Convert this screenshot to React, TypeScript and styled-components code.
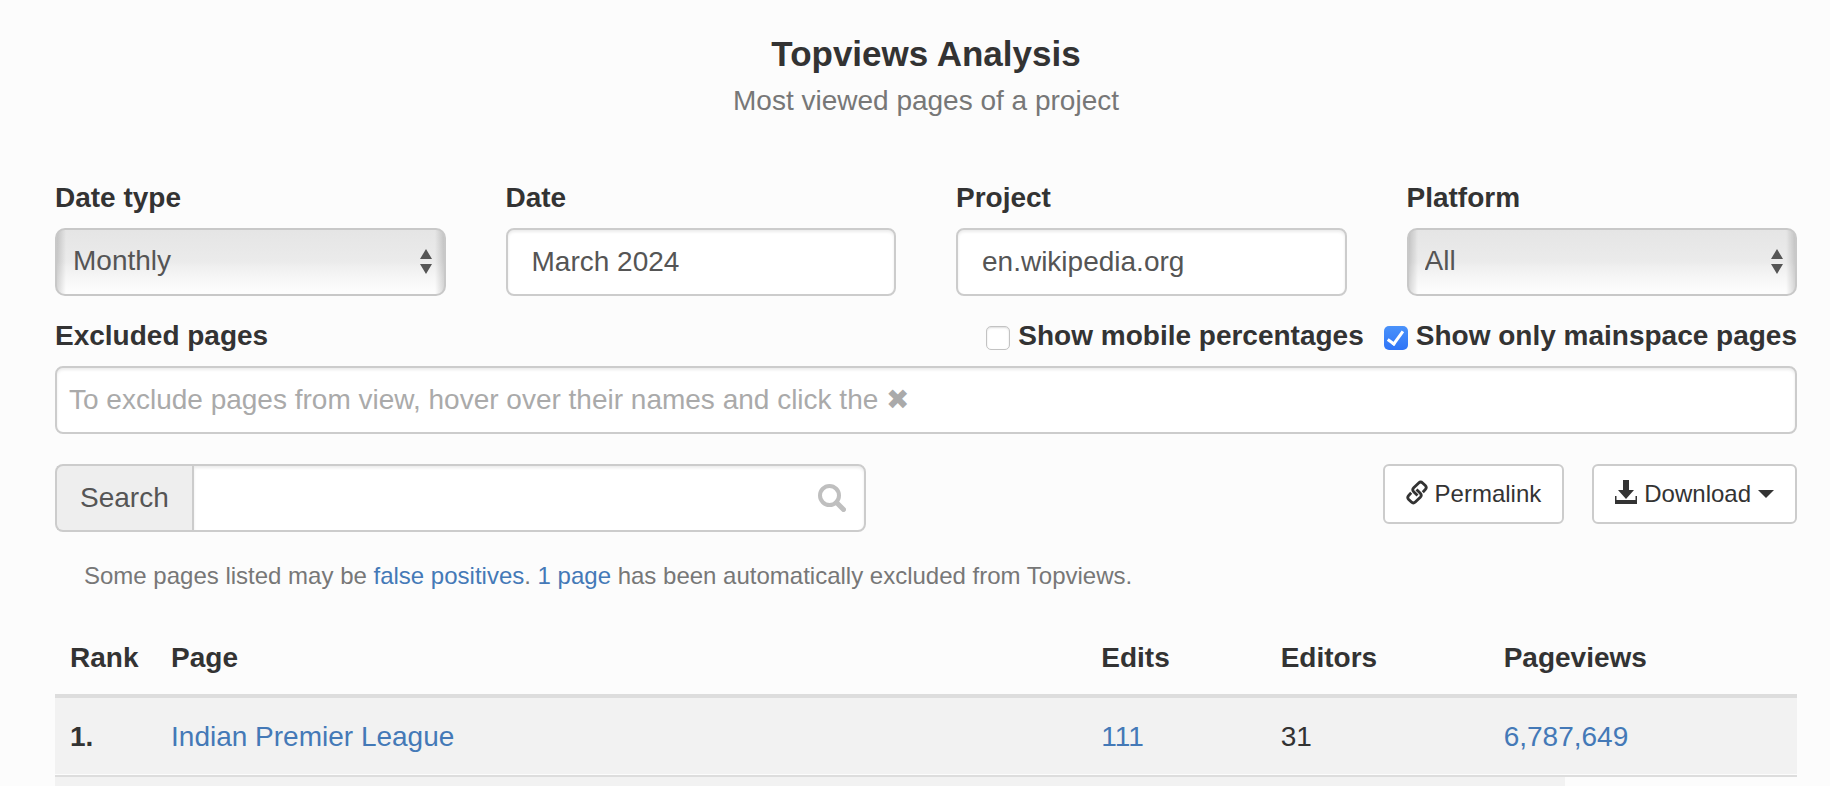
import React from "react";
import styled, { createGlobalStyle } from "styled-components";

const GlobalStyle = createGlobalStyle`
  *, *::before, *::after { box-sizing: border-box; }
  body {
    margin: 0;
    background: #fcfcfc;
    color: #333;
    font: 28px/40px "Liberation Sans", Arial, "DejaVu Sans", sans-serif;
  }
  input, select, button { font: inherit; margin: 0; }
`;

const Page = styled.main`
  padding: 32px 33px 0 55px;
`;

const Header = styled.header`
  text-align: center;
  margin-bottom: 57px;
`;

const Title = styled.h1`
  margin: 0;
  font-size: 35px;
  line-height: 44px;
`;

const Subtitle = styled.p`
  margin: 5px 0 0;
  color: #777;
`;

const Filters = styled.div`
  display: grid;
  grid-template-columns: repeat(4, 1fr);
  column-gap: 60px;
`;

const Field = styled.div`
  display: flex;
  flex-direction: column;
  gap: 10px;
`;

const Label = styled.label`
  font-weight: bold;
`;

const TextInput = styled.input`
  width: 100%;
  height: 68px;
  padding: 0 24px;
  color: #555;
  background: #fff;
  border: 2px solid #ccc;
  border-radius: 8px;
  box-shadow: inset 0 2px 3px rgba(0, 0, 0, 0.08);
`;

const SelectWrap = styled.div`
  position: relative;
  display: flex;
`;

const Select = styled.select`
  appearance: none;
  width: 100%;
  height: 68px;
  padding: 0 40px 2px 16px;
  color: #555;
  background:
    linear-gradient(
      to right,
      rgba(0, 0, 0, 0.15),
      transparent 9px,
      transparent calc(100% - 9px),
      rgba(0, 0, 0, 0.15)
    ),
    linear-gradient(#e5e5e5, #ebebeb 50%, #f0f0f0 58%, #fdfdfd 95%);
  border: 2px solid #c8c8c8;
  border-radius: 10px;
`;

const SelectArrows = styled.svg`
  position: absolute;
  right: 14px;
  top: 21px;
  pointer-events: none;
`;

const ExcludedHead = styled.div`
  display: flex;
  justify-content: space-between;
  margin: 20px 0 10px;
`;

const Options = styled.div`
  display: flex;
  gap: 20px;
`;

const CheckLabel = styled.label`
  display: flex;
  align-items: center;
  gap: 8px;
  font-weight: bold;
`;

const CheckBox = styled.input`
  appearance: none;
  display: grid;
  place-content: center;
  width: 24px;
  height: 24px;
  margin-top: 4px;
  background: #fff;
  border: 1px solid #c3c3c3;
  border-radius: 5px;
  box-shadow: inset 0 1px 2px rgba(0, 0, 0, 0.14);

  &:checked {
    border: none;
    box-shadow: none;
    background: linear-gradient(#4a92fa, #2f74f7);
  }
  &:checked::after {
    content: "";
    width: 9px;
    height: 17px;
    margin-bottom: 4px;
    border: solid #fff;
    border-width: 0 3px 3px 0;
    transform: rotate(36deg);
  }
`;

const ExcludedInput = styled(TextInput)`
  display: block;
  padding: 0 12px;

  &::placeholder {
    color: #aaa;
    opacity: 1;
  }
`;

const Toolbar = styled.div`
  display: flex;
  justify-content: space-between;
  align-items: flex-start;
  margin-top: 30px;
`;

const SearchGroup = styled.div`
  position: relative;
  display: flex;
  width: 811px;
  max-width: 60%;
`;

const SearchAddon = styled.label`
  padding: 12px 23px 0;
  color: #555;
  background: #eee;
  border: 2px solid #ccc;
  border-right: none;
  border-radius: 8px 0 0 8px;
`;

const SearchInput = styled(TextInput)`
  flex: 1;
  min-width: 0;
  border-radius: 0 8px 8px 0;
`;

const SearchIcon = styled.svg`
  position: absolute;
  right: 20px;
  top: 20px;
`;

const Buttons = styled.div`
  display: flex;
  gap: 28px;
`;

const Button = styled.button`
  display: flex;
  align-items: center;
  gap: 7px;
  height: 60px;
  padding: 0 21px;
  color: #333;
  font-size: 24px;
  line-height: 36px;
  background: #fff;
  border: 2px solid #ccc;
  border-radius: 6px;
`;

const ButtonIcon = styled.svg`
  margin-bottom: 4px;
`;

const Notice = styled.p`
  margin: 26px 29px 0;
  color: #777;
  font-size: 24px;
  line-height: 36px;
`;

const Link = styled.a`
  color: #4479b7;
  text-decoration: none;
`;

const Table = styled.table`
  width: 100%;
  margin-top: 28px;
  table-layout: fixed;
  border-collapse: collapse;
`;

const HeadCell = styled.th<{ $width: string }>`
  width: ${(p) => p.$width};
  padding: 16px 15px;
  text-align: left;
  border-bottom: 4px solid #ddd;
`;

const Row = styled.tr<{ $share: number }>`
  background: linear-gradient(#f2f2f2, #f2f2f2) no-repeat 0 0 / ${(p) => p.$share}% 100%;
  border-bottom: 2px solid #ddd;
`;

const Cell = styled.td<{ $bold?: boolean }>`
  padding: 19px 15px 18px;
  font-weight: ${(p) => (p.$bold ? "bold" : "normal")};
`;

const NextRow = styled.tr`
  height: 10px;
  background: linear-gradient(#f2f2f2, #f2f2f2) no-repeat 0 0 / 86.7% 100%;
`;

const Arrows = () => (
  <SelectArrows width="12" height="26" viewBox="0 0 12 26" fill="#555" aria-hidden="true">
    <path d="M6 0l6 10H0zM6 25l6-10H0z" />
  </SelectArrows>
);

const columns = [
  { name: "Rank", width: "5.8%" },
  { name: "Page", width: "53.4%" },
  { name: "Edits", width: "10.3%" },
  { name: "Editors", width: "12.8%" },
  { name: "Pageviews", width: "17.7%" },
];

export default function App() {
  return (
    <Page>
      <GlobalStyle />
      <Header>
        <Title>Topviews Analysis</Title>
        <Subtitle>Most viewed pages of a project</Subtitle>
      </Header>

      <Filters>
        <Field>
          <Label htmlFor="date-type">Date type</Label>
          <SelectWrap>
            <Select id="date-type" defaultValue="Monthly">
              <option>Monthly</option>
              <option>Daily</option>
            </Select>
            <Arrows />
          </SelectWrap>
        </Field>
        <Field>
          <Label htmlFor="date">Date</Label>
          <TextInput id="date" defaultValue="March 2024" />
        </Field>
        <Field>
          <Label htmlFor="project">Project</Label>
          <TextInput id="project" defaultValue="en.wikipedia.org" />
        </Field>
        <Field>
          <Label htmlFor="platform">Platform</Label>
          <SelectWrap>
            <Select id="platform" defaultValue="All">
              <option>All</option>
              <option>Desktop</option>
            </Select>
            <Arrows />
          </SelectWrap>
        </Field>
      </Filters>

      <ExcludedHead>
        <Label htmlFor="excluded">Excluded pages</Label>
        <Options>
          <CheckLabel>
            <CheckBox type="checkbox" />
            Show mobile percentages
          </CheckLabel>
          <CheckLabel>
            <CheckBox type="checkbox" defaultChecked />
            Show only mainspace pages
          </CheckLabel>
        </Options>
      </ExcludedHead>
      <ExcludedInput
        id="excluded"
        placeholder="To exclude pages from view, hover over their names and click the ✖"
      />

      <Toolbar>
        <SearchGroup>
          <SearchAddon htmlFor="search">Search</SearchAddon>
          <SearchInput id="search" />
          <SearchIcon width="28" height="28" viewBox="0 0 28 28" fill="none" stroke="#bfbfbf" aria-hidden="true">
            <circle cx="11.5" cy="11.5" r="9.5" strokeWidth="4" />
            <path d="M18.5 18.5L25.500 25.500" strokeWidth="5" strokeLinecap="round" />
          </SearchIcon>
        </SearchGroup>
        <Buttons>
          <Button type="button">
            <ButtonIcon width="22" height="25" viewBox="0 0 22 25" fill="none" stroke="#333" strokeWidth="2.8" aria-hidden="true">
              <path d="M11.500 15.500L7.700 11.800Q5.800 9.800 7.700 7.800L12.700 2.900Q14.700 1 16.600 2.900L19.300 5.500Q21.200 7.500 19.300 9.500L16.800 12.200" />
              <path d="M10.500 9.500L14.300 13.200Q16.200 15.200 14.300 17.200L9.300 22.100Q7.300 24 5.400 22.100L2.700 19.500Q0.800 17.500 2.700 15.500L5.200 12.800" />
            </ButtonIcon>
            Permalink
          </Button>
          <Button type="button">
            <ButtonIcon width="22" height="24" viewBox="0 0 22 24" fill="#333" aria-hidden="true">
              <path d="M8 0h6v10h5l-8 9-8-9h5zM0 16h1.500v4h19v-4H22v8H0z" />
            </ButtonIcon>
            Download
            <svg width="16" height="8" viewBox="0 0 16 8" fill="#333" aria-hidden="true">
              <path d="M0 0h16l-8 8z" />
            </svg>
          </Button>
        </Buttons>
      </Toolbar>

      <Notice>
        Some pages listed may be <Link href="#false-positives">false positives</Link>. <Link href="#excluded">1 page</Link>{" "}
        has been automatically excluded from Topviews.
      </Notice>

      <Table>
        <thead>
          <tr>
            {columns.map((c) => (
              <HeadCell key={c.name} scope="col" $width={c.width}>
                {c.name}
              </HeadCell>
            ))}
          </tr>
        </thead>
        <tbody>
          <Row $share={100}>
            <Cell $bold>1.</Cell>
            <Cell>
              <Link href="#page">Indian Premier League</Link>
            </Cell>
            <Cell>
              <Link href="#edits">111</Link>
            </Cell>
            <Cell>31</Cell>
            <Cell>
              <Link href="#views">6,787,649</Link>
            </Cell>
          </Row>
          <NextRow>
            <td colSpan={5} />
          </NextRow>
        </tbody>
      </Table>
    </Page>
  );
}
